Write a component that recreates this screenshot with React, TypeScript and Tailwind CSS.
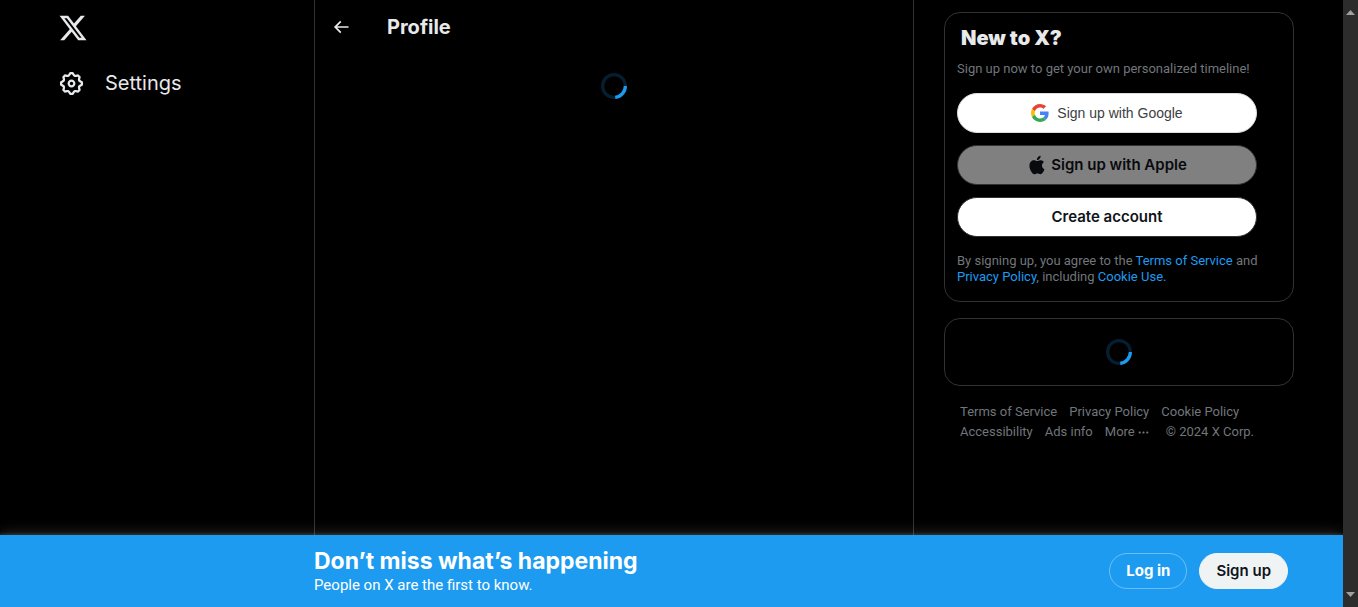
import React from "react";

function XLogo() {
  return (
    <svg viewBox="0 0 24 24" className="size-[30px] fill-current" aria-hidden="true">
      <path d="M18.244 2.25h3.308l-7.227 8.26 8.502 11.24H16.17l-5.214-6.817L4.99 21.75H1.68l7.73-8.835L1.254 2.25H8.08l4.713 6.231zm-1.161 17.52h1.833L7.084 4.126H5.117z" />
    </svg>
  );
}

function GearIcon() {
  return (
    <svg viewBox="0 0 24 24" className="size-[27px] fill-current" aria-hidden="true">
      <path d="M10.54 1.75h2.92l1.57 2.36c.11.17.32.25.53.21l2.53-.59 2.17 2.17-.58 2.54c-.05.2.04.41.21.53l2.36 1.57v2.92l-2.36 1.57c-.17.12-.26.33-.21.53l.58 2.54-2.17 2.17-2.53-.59c-.21-.04-.42.04-.53.21l-1.57 2.36h-2.92l-1.58-2.36c-.11-.17-.32-.25-.52-.21l-2.54.59-2.17-2.17.58-2.54c.05-.2-.03-.41-.21-.53l-2.35-1.57v-2.92L4.1 8.97c.18-.12.26-.33.21-.53L3.73 5.9 5.9 3.73l2.54.59c.2.04.41-.04.52-.21l1.58-2.36zm1.07 2l-.98 1.47C10.05 6.08 9 6.5 7.99 6.27l-1.46-.34-.6.6.33 1.46c.24 1.01-.18 2.07-1.05 2.64l-1.46.98v.78l1.46.98c.87.57 1.29 1.63 1.05 2.64l-.33 1.46.6.6 1.46-.34c1.01-.23 2.06.19 2.64 1.05l.98 1.47h.78l.97-1.47c.58-.86 1.63-1.28 2.65-1.05l1.45.34.61-.6-.34-1.46c-.23-1.01.18-2.07 1.05-2.64l1.47-.98v-.78l-1.47-.98c-.87-.57-1.28-1.63-1.05-2.64l.34-1.46-.61-.6-1.45.34c-1.02.23-2.07-.19-2.65-1.05l-.97-1.47h-.78zM12 10.5c-.83 0-1.5.67-1.5 1.5s.67 1.5 1.5 1.5c.82 0 1.5-.67 1.5-1.5s-.68-1.5-1.5-1.5zM8.5 12c0-1.93 1.56-3.5 3.5-3.5 1.93 0 3.5 1.57 3.5 3.5s-1.57 3.5-3.5 3.5c-1.94 0-3.5-1.57-3.5-3.5z" />
    </svg>
  );
}

function BackIcon() {
  return (
    <svg viewBox="0 0 24 24" className="size-5 fill-current" aria-hidden="true">
      <path d="M7.414 13l5.043 5.04-1.414 1.42L3.586 12l7.457-7.46 1.414 1.42L7.414 11H21v2H7.414z" />
    </svg>
  );
}

function GoogleIcon() {
  return (
    <svg viewBox="0 0 48 48" className="size-[18px]" aria-hidden="true">
      <path fill="#EA4335" d="M24 9.5c3.54 0 6.71 1.22 9.21 3.6l6.85-6.85C35.9 2.38 30.47 0 24 0 14.62 0 6.51 5.38 2.56 13.22l7.98 6.19C12.43 13.72 17.74 9.5 24 9.5z" />
      <path fill="#4285F4" d="M46.98 24.55c0-1.57-.15-3.09-.38-4.55H24v9.02h12.94c-.58 2.96-2.26 5.48-4.78 7.18l7.73 6c4.51-4.18 7.09-10.36 7.09-17.65z" />
      <path fill="#FBBC05" d="M10.53 28.59c-.48-1.45-.76-2.99-.76-4.59s.27-3.14.76-4.59l-7.98-6.19C.92 16.46 0 20.12 0 24c0 3.88.92 7.54 2.56 10.78l7.97-6.19z" />
      <path fill="#34A853" d="M24 48c6.48 0 11.93-2.13 15.89-5.81l-7.73-6c-2.15 1.45-4.92 2.3-8.16 2.3-6.26 0-11.57-4.22-13.47-9.91l-7.98 6.19C6.51 42.62 14.62 48 24 48z" />
    </svg>
  );
}

function AppleIcon() {
  return (
    <svg viewBox="0 0 24 24" className="size-5 fill-current" aria-hidden="true">
      <path d="M16.365 1.43c0 1.14-.493 2.27-1.177 3.08-.744.9-1.99 1.57-2.987 1.57-.12 0-.23-.02-.3-.03-.01-.06-.04-.22-.04-.39 0-1.15.572-2.27 1.206-2.98.804-.94 2.142-1.64 3.248-1.68.03.13.05.28.05.43zm4.565 15.71c-.03.07-.463 1.58-1.518 3.12-.945 1.34-1.94 2.71-3.43 2.71-1.517 0-1.9-.88-3.63-.88-1.698 0-2.302.91-3.67.91-1.377 0-2.332-1.26-3.428-2.8-1.287-1.82-2.323-4.63-2.323-7.28 0-4.28 2.797-6.55 5.552-6.55 1.448 0 2.675.95 3.6.95.865 0 2.222-1.01 3.902-1.01.613 0 2.886.06 4.374 2.19-.13.09-2.383 1.37-2.383 4.19 0 3.26 2.854 4.42 2.955 4.45z" />
    </svg>
  );
}

function Spinner() {
  return (
    <svg viewBox="0 0 32 32" className="size-[26px]" role="img" aria-label="Loading">
      <circle cx="16" cy="16" r="14" fill="none" strokeWidth="4" stroke="#1d9bf0" opacity="0.2" />
      <path d="M30 16A14 14 0 0 1 17.5 29.92" fill="none" strokeWidth="4" stroke="#1d9bf0" />
    </svg>
  );
}

function ScrollTrack() {
  return (
    <div className="flex w-[15px] shrink-0 flex-col items-center justify-between bg-[#2c2c2c] py-2.5" aria-hidden="true">
      <svg viewBox="0 0 9 5" className="h-[5px] w-[9px] fill-[#a0a0a0]">
        <path d="M4.5 0L9 5H0z" />
      </svg>
      <svg viewBox="0 0 9 5" className="h-[5px] w-[9px] fill-[#a0a0a0]">
        <path d="M0 0H9L4.5 5z" />
      </svg>
    </div>
  );
}

function SignUpCard() {
  return (
    <section className="rounded-2xl border border-[#2f3336] px-3 pt-3 pb-4">
      <h2 className="px-1 pt-px font-['Inter',sans-serif] text-[20px] leading-6 font-black">New to X?</h2>
      <p className="mt-[11px] text-[13px] leading-4 text-[#71767b]">Sign up now to get your own personalized timeline!</p>
      <div className="mt-4 flex max-w-[300px] flex-col gap-3">
        <button className="flex h-10 items-center justify-center gap-2 rounded-full border border-[#dadce0] bg-white font-['Liberation_Sans',sans-serif] text-[14px] text-[#3c4043]">
          <GoogleIcon />
          Sign up with Google
        </button>
        <button className="flex h-10 items-center justify-center gap-1 rounded-full border border-[#2f3336] bg-[#808080] font-['Inter',sans-serif] text-[15px] font-semibold text-[#080a0d]">
          <AppleIcon />
          Sign up with Apple
        </button>
        <button className="flex h-10 items-center justify-center rounded-full border border-[#2f3336] bg-white font-['Inter',sans-serif] text-[15px] font-semibold text-[#0f1419]">
          Create account
        </button>
      </div>
      <p className="mt-4 text-[13px] leading-4 text-[#71767b]">
        By signing up, you agree to the <a href="#tos" className="text-[#1d9bf0]">Terms of Service</a> and{" "}
        <a href="#privacy" className="text-[#1d9bf0]">Privacy Policy</a>, including{" "}
        <a href="#cookies" className="text-[#1d9bf0]">Cookie Use.</a>
      </p>
    </section>
  );
}

function FooterLinks() {
  return (
    <nav aria-label="Footer" className="flex flex-wrap gap-x-3 px-4 text-[13px] leading-5 text-[#71767b]">
      <a href="#terms">Terms of Service</a>
      <a href="#privacy-policy">Privacy Policy</a>
      <a href="#cookie-policy">Cookie Policy</a>
      <a href="#accessibility">Accessibility</a>
      <a href="#ads">Ads info</a>
      <button className="mr-1 flex items-center gap-0.5">
        More
        <svg viewBox="0 0 24 24" className="size-[13px] fill-current" aria-hidden="true">
          <path d="M3 12c0-1.1.9-2 2-2s2 .9 2 2-.9 2-2 2-2-.9-2-2zm9 2c1.1 0 2-.9 2-2s-.9-2-2-2-2 .9-2 2 .9 2 2 2zm7 0c1.1 0 2-.9 2-2s-.9-2-2-2-2 .9-2 2 .9 2 2 2z" />
        </svg>
      </button>
      <span>© 2024 X Corp.</span>
    </nav>
  );
}

export default function App() {
  return (
    <div className="flex min-h-screen bg-black font-['Roboto','Liberation_Sans',sans-serif] text-[#e7e9ea]">
      <div className="flex min-w-0 flex-1 flex-col overflow-hidden">
        <div className="flex flex-1 justify-center pr-px">
          <header className="w-[266px] px-2.5">
            <a href="#home" aria-label="X" className="flex h-14 items-center text-[#e7e9ea]">
              <XLogo />
            </a>
            <nav>
              <a href="#settings" className="flex h-[54px] items-center gap-5 font-['Inter',sans-serif] text-[20px]">
                <GearIcon />
                Settings
              </a>
            </nav>
          </header>
          <main className="w-[600px] border-x border-[#2f3336]">
            <div className="flex h-[53px] items-center gap-9 px-4">
              <button aria-label="Back">
                <BackIcon />
              </button>
              <h1 className="font-['Inter',sans-serif] text-[20px] leading-6 font-bold">Profile</h1>
            </div>
            <div className="flex justify-center pt-5">
              <Spinner />
            </div>
          </main>
          <aside className="ml-[30px] flex w-[350px] flex-col gap-4 pt-3">
            <SignUpCard />
            <div className="flex justify-center rounded-2xl border border-[#2f3336] py-5">
              <Spinner />
            </div>
            <FooterLinks />
          </aside>
        </div>
        <div className="relative flex h-[72px] justify-center bg-[#1d9bf0] pr-px shadow-[0_0_15px_rgba(255,255,255,0.2),0_0_3px_1px_rgba(255,255,255,0.15)]">
          <div className="flex w-[1246px] items-center justify-between pr-1.5 pl-[266px]">
            <div className="text-white">
              <p className="font-['Inter',sans-serif] text-[23px] leading-7 font-bold">Don’t miss what’s happening</p>
              <p className="text-[15px] leading-5">People on X are the first to know.</p>
            </div>
            <div className="flex gap-3 font-['Inter',sans-serif] text-[15px]">
              <button className="h-9 rounded-full border border-white/35 px-4 font-bold text-white">Log in</button>
              <button className="h-9 rounded-full border border-[#eff3f4] bg-[#eff3f4] px-4 font-semibold text-[#0f1419]">Sign up</button>
            </div>
          </div>
        </div>
      </div>
      <ScrollTrack />
    </div>
  );
}
